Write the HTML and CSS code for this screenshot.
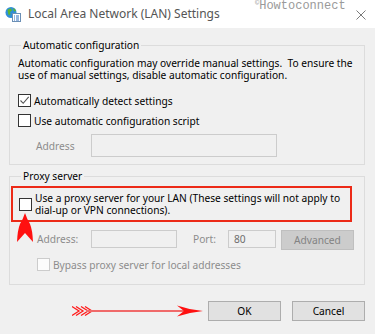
FILE: index.html
```html
<!doctype html>
<html lang="en">
  <head>
    <meta charset="UTF-8">
    <meta name="viewport" content="width=device-width, initial-scale=1.0">
    <title>Local Area Network (LAN) Settings</title>
    <link rel="stylesheet" href="styles.css">
  </head>
  <body>
    <div class="window">
      <div class="titlebar">
        <svg class="app-icon" width="16" height="16" viewBox="0 0 16 16">
          <circle cx="6" cy="6.5" r="5.5" fill="#2f8fd8"/>
          <path d="M2.5 4 Q4 2 6 2.5 L7 4.5 L5 6 L5.5 8.5 L3.5 9 Z" fill="#5cb531"/>
          <path d="M8 2 Q10.5 3 11 5 L9 5.5 Z" fill="#5cb531"/>
          <rect x="7.5" y="7.5" width="8" height="8" fill="#fff" stroke="#6b8fb5"/>
          <path d="M9 10h1M11 10h3M9 12h1M11 12h3M9 14h1M11 14h3" stroke="#2f6fbf" stroke-width="1"/>
        </svg>
        <span class="title">Local Area Network (LAN) Settings</span>
        <span class="watermark"><sup>©</sup>Howtoconnect</span>
        <svg class="close" width="10" height="10" viewBox="0 0 10 10">
          <path d="M0.5 0.5 L9.5 9.5 M9.5 0.5 L0.5 9.5" stroke="#7a7a7a" stroke-width="1"/>
        </svg>
      </div>

      <div class="content">
        <fieldset class="group auto">
          <legend>Automatic configuration</legend>
          <p class="desc">Automatic configuration may override manual settings.&nbsp; To ensure the<br>use of manual settings, disable automatic configuration.</p>
          <div class="check first">
            <span class="box">
              <svg width="11" height="11" viewBox="0 0 11 11"><path d="M1.5 5.5 L4.2 8.3 L9.7 1.8" fill="none" stroke="#555" stroke-width="1.1"/></svg>
            </span>
            <span>Automatically detect settings</span>
          </div>
          <div class="check">
            <span class="box"></span>
            <span>Use automatic configuration script</span>
          </div>
          <div class="field-row addr-row">
            <span class="field-label muted">Address</span>
            <span class="input script-input"></span>
          </div>
        </fieldset>

        <fieldset class="group proxy">
          <legend>Proxy server</legend>
          <div class="highlight">
            <span class="box"></span>
            <span class="highlight-text">Use a proxy server for your LAN (These settings will not apply to<br>dial-up or VPN connections).</span>
            <svg class="up-arrow" width="17" height="30" viewBox="0 0 17 30">
              <path d="M8 0 Q10 6 13 11 Q15.5 17 16 29 L8 20 L0 29 Q0.5 17 3 11 Q6 6 8 0 Z" fill="#ff1010"/>
            </svg>
          </div>
          <div class="field-row proxy-row">
            <span class="field-label muted">Address:</span>
            <span class="input proxy-input"></span>
            <span class="field-label muted port-label">Port:</span>
            <span class="input port-input">80</span>
            <span class="btn disabled">Advanced</span>
          </div>
          <div class="check bypass">
            <span class="box off"></span>
            <span class="muted">Bypass proxy server for local addresses</span>
          </div>
        </fieldset>

        <div class="actions">
          <svg class="pointer" width="131" height="12" viewBox="0 0 131 12">
            <path d="M0 1.5 L7 6 L0 10.5 M4 1.5 L11 6 L4 10.5 M9 1.5 L16 6 L9 10.5 M13 1.5 L20 6 L13 10.5" fill="none" stroke="#ff1a1a" stroke-width="1.3"/>
            <path d="M14 6 H112" stroke="#f06a6a" stroke-width="2"/>
            <path d="M105 0.5 Q118 5 131 6 Q118 7 105 11.5 L112 6 Z" fill="#ff1010"/>
          </svg>
          <span class="btn">OK</span>
          <span class="btn">Cancel</span>
        </div>
      </div>
    </div>
  </body>
</html>
```

FILE: styles.css
```css
body {
  margin: 0;
  background: #f0f0f0;
  font-family: 'Noto Sans', sans-serif;
  font-size: 10.2px;
  color: #000;
  white-space: nowrap;
}

.window {
  width: 375px;
  height: 334px;
  overflow: hidden;
}

.titlebar {
  height: 28px;
  background: #fff;
  display: flex;
  align-items: center;
  position: relative;
}

.app-icon {
  margin-left: 5px;
  margin-top: -1px;
}

.title {
  margin-left: 7px;
  font-size: 12px;
  color: #555;
  margin-top: -2px;
}

.watermark {
  position: absolute;
  left: 255px;
  top: 0;
  font-family: 'Liberation Mono', monospace;
  font-size: 12px;
  line-height: 12px;
  color: #9a9a9a;
}

.watermark sup {
  font-size: 7px;
  line-height: 7px;
  vertical-align: 4px;
}

.close {
  margin-left: auto;
  margin-right: 9px;
  margin-top: 1px;
}

.content {
  padding: 0 10px 0 9px;
}

.group {
  margin: 0;
  border: 1px solid #dcdcdc;
  padding: 0 8px;
  min-width: 0;
}

.group legend {
  margin-left: 3px;
  padding: 0 2px;
  line-height: 14px;
}

.auto {
  margin-top: 10px;
  padding-top: 5px;
  padding-bottom: 7px;
}

.proxy {
  margin-top: 4px;
  padding-top: 3px;
  padding-bottom: 13px;
}

.desc {
  margin: 0;
  line-height: 12px;
}

.check {
  display: flex;
  align-items: center;
  gap: 3px;
  line-height: 12px;
  margin-top: 7px;
}

.check.first {
  margin-top: 13px;
}

.box {
  width: 11px;
  height: 11px;
  border: 1px solid #333;
  background: #fff;
  display: flex;
  flex: none;
}

.box.off {
  border-color: #cccccc;
  background: #fcfcfc;
}

.muted {
  color: #8c8c8c;
}

.field-row {
  display: flex;
  align-items: center;
}

.addr-row {
  margin-top: 7px;
  padding-left: 18px;
}

.addr-row .field-label {
  width: 55px;
}

.input {
  display: block;
  box-sizing: border-box;
  border: 1px solid #cccccc;
  background: #f0f0f0;
  color: #6d6d6d;
  padding: 0 7px;
  line-height: 16px;
}

.script-input {
  width: 186px;
  height: 23px;
}

.highlight {
  position: relative;
  margin: 0 4px 0 -7px;
  border: 2px solid #ec2a17;
  padding: 4px 6px;
  display: flex;
  align-items: center;
  gap: 3px;
  line-height: 12px;
}

.up-arrow {
  position: absolute;
  left: 4px;
  top: 25px;
}

.proxy-row {
  margin-top: 8px;
  padding-left: 19px;
  align-items: flex-start;
  line-height: 18px;
}

.proxy-row .field-label {
  width: 54px;
}

.proxy-input {
  width: 86px;
  height: 18px;
}

.proxy-row .port-label {
  width: auto;
  margin-left: 16px;
}

.port-input {
  width: 48px;
  height: 18px;
  margin-left: 12px;
  padding: 0 5px;
}

.btn {
  box-sizing: border-box;
  width: 73px;
  height: 20px;
  border: 1px solid #adadad;
  background: #e1e1e1;
  display: flex;
  align-items: center;
  justify-content: center;
}

.btn.disabled {
  margin-left: 5px;
  border-color: #bfbfbf;
  background: #cccccc;
  color: #838383;
}

.bypass {
  margin-top: 8px;
  padding-left: 19px;
}

.actions {
  display: flex;
  align-items: center;
  justify-content: flex-end;
  margin-top: 16px;
  gap: 11px;
}

.pointer {
  margin-right: -6px;
}
```
